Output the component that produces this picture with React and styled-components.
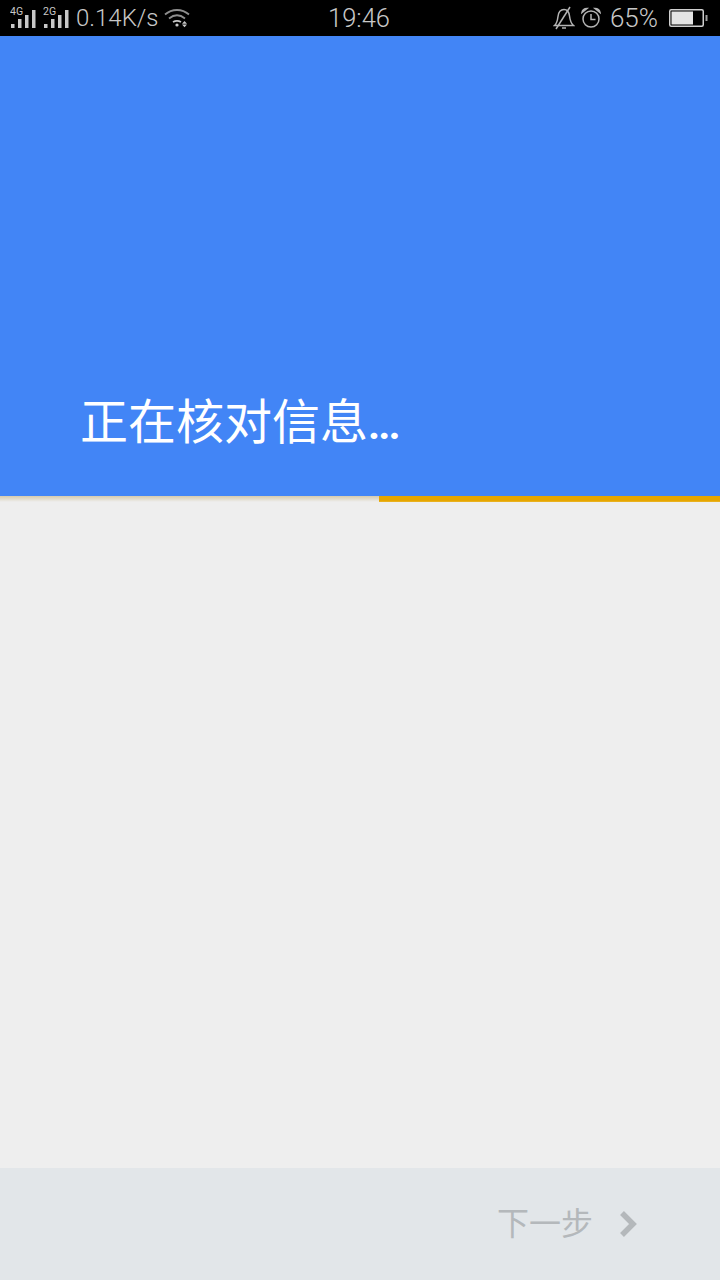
import React from 'react';
import styled, { createGlobalStyle } from 'styled-components';

const GlobalStyle = createGlobalStyle`
  html, body {
    margin: 0;
    padding: 0;
    background: #eeeeee;
  }
  * {
    box-sizing: border-box;
  }
`;

const Screen = styled.div`
  width: 720px;
  height: 1280px;
  display: flex;
  flex-direction: column;
  overflow: hidden;
  font-family: "Roboto", "Noto Sans CJK SC", sans-serif;
`;

const StatusBar = styled.div`
  height: 36px;
  flex: none;
  background: #000;
  color: #c8c8c8;
  display: grid;
  grid-template-columns: 1fr auto 1fr;
  align-items: center;
  padding: 0 12px 0 10px;
`;

const StatusGroup = styled.div`
  display: flex;
  align-items: center;
  justify-content: ${(p) => (p.$end ? 'flex-end' : 'flex-start')};
`;

const StatusText = styled.span`
  font-size: ${(p) => p.$size || 24}px;
  line-height: 36px;
  font-weight: 300;
`;

const Header = styled.div`
  height: 460px;
  flex: none;
  background: #4285f6;
  display: flex;
  align-items: flex-end;
  padding: 0 0 45px 80px;
`;

const Title = styled.h1`
  margin: 0;
  height: 56px;
  font-size: 48px;
  line-height: 56px;
  font-weight: 400;
  color: #fff;
`;

const Dots = styled.span`
  font-size: 42px;
  line-height: 0;
  font-weight: 700;
  letter-spacing: -2px;
`;

const Progress = styled.div`
  height: 6px;
  flex: none;
  background: linear-gradient(#d6cbae, #eeeeee);
  display: flex;
  justify-content: flex-end;
`;

const ProgressFill = styled.div`
  width: 341px;
  background: linear-gradient(#e6a600 88%, #eec85e);
`;

const Content = styled.div`
  flex: 1;
  background: #eeeeee;
`;

const Footer = styled.div`
  height: 112px;
  flex: none;
  background: #e2e6e9;
  display: flex;
  align-items: center;
  justify-content: flex-end;
  gap: 26px;
  padding: 0 81px 0 0;
`;

const NextLabel = styled.span`
  font-size: 32px;
  line-height: 40px;
  color: #b4b8bb;
  margin-left: -1px;
`;

const Icon = styled.svg`
  display: block;
  flex: none;
  margin: ${(p) => p.$margin || '0'};
`;

function Signal({ label, margin }) {
  return (
    <Icon width="28" height="24" viewBox="0 0 28 24" $margin={margin} fill="#c8c8c8">
      <rect x="1" y="18" width="3.5" height="4" />
      <rect x="8" y="13" width="3.5" height="9" />
      <rect x="15" y="9" width="3.5" height="13" />
      <rect x="22" y="4" width="3.5" height="18" />
      <text x="0" y="9" fontSize="10.5" fontFamily="Roboto, sans-serif">{label}</text>
    </Icon>
  );
}

function Wifi() {
  return (
    <Icon width="26" height="20" viewBox="0 0 26 20" $margin="0 0 0 5px" fill="none" stroke="#8e8e8e" strokeWidth="1.8">
      <path d="M1 6.5C8 0.5 18 0.5 25 6.5" />
      <path d="M5 10.5C10 6.5 16 6.5 21 10.5" />
      <path d="M9 14C11.5 12.5 14.5 12.5 17 14" stroke="#c8c8c8" />
      <circle cx="13" cy="17" r="1.6" fill="#c8c8c8" stroke="none" />
      <path d="M20.5 13l2.5 2.7h-5z M18 16.6h5l-2.5 2.7z" fill="#c8c8c8" stroke="none" />
    </Icon>
  );
}

function MutedBell() {
  return (
    <Icon width="22" height="24" viewBox="0 0 22 24" fill="none" stroke="#b4b4b4" strokeWidth="1.5" $margin="0 6px 0 0">
      <path d="M1.5 19.5C4 17.5 4.5 14.5 5 10.5C5.5 6 8 3.5 11 3.5C14.5 3.5 16 6 16.5 10C17 14 18 17.5 20.5 19.5Z" />
      <path d="M9 22h4" />
      <path d="M3 23L17 1" />
    </Icon>
  );
}

function Alarm() {
  return (
    <Icon width="20" height="22" viewBox="0 0 20 22" fill="none" stroke="#b4b4b4" strokeWidth="1.5" $margin="0 9px 0 0">
      <circle cx="10" cy="12" r="8" />
      <path d="M10 7v5.5h4.5" />
      <path d="M1 5.5C1.5 3 3.5 1.5 6 1.5Z" fill="#b4b4b4" />
      <path d="M19 5.5C18.5 3 16.5 1.5 14 1.5Z" fill="#b4b4b4" />
    </Icon>
  );
}

function Battery() {
  return (
    <Icon width="39" height="18" viewBox="0 0 39 18" $margin="0 0 0 11px">
      <rect x="0.75" y="0.75" width="33.5" height="16.5" rx="1.5" fill="none" stroke="#d0d0d0" strokeWidth="1.5" />
      <rect x="2.5" y="2.5" width="21.5" height="13" fill="#e4e4e4" />
      <rect x="36.5" y="6" width="2" height="6" fill="#a0a0a0" />
    </Icon>
  );
}

export default function App() {
  return (
    <>
      <GlobalStyle />
      <Screen>
        <StatusBar>
          <StatusGroup>
            <Signal label="4G" margin="0 5px 0 0" />
            <Signal label="2G" margin="0 5px 0 0" />
            <StatusText>0.14K/s</StatusText>
            <Wifi />
          </StatusGroup>
          <StatusText $size={25.5}>19:46</StatusText>
          <StatusGroup $end>
            <MutedBell />
            <Alarm />
            <StatusText $size={26}>65%</StatusText>
            <Battery />
          </StatusGroup>
        </StatusBar>
        <Header>
          <Title>正在核对信息<Dots>...</Dots></Title>
        </Header>
        <Progress>
          <ProgressFill />
        </Progress>
        <Content />
        <Footer>
          <NextLabel>下一步</NextLabel>
          <Icon width="20" height="26" viewBox="0 0 20 26" fill="none" stroke="#b4b8bb" strokeWidth="5.5">
            <path d="M3 2l11 11L3 24" />
          </Icon>
        </Footer>
      </Screen>
    </>
  );
}
